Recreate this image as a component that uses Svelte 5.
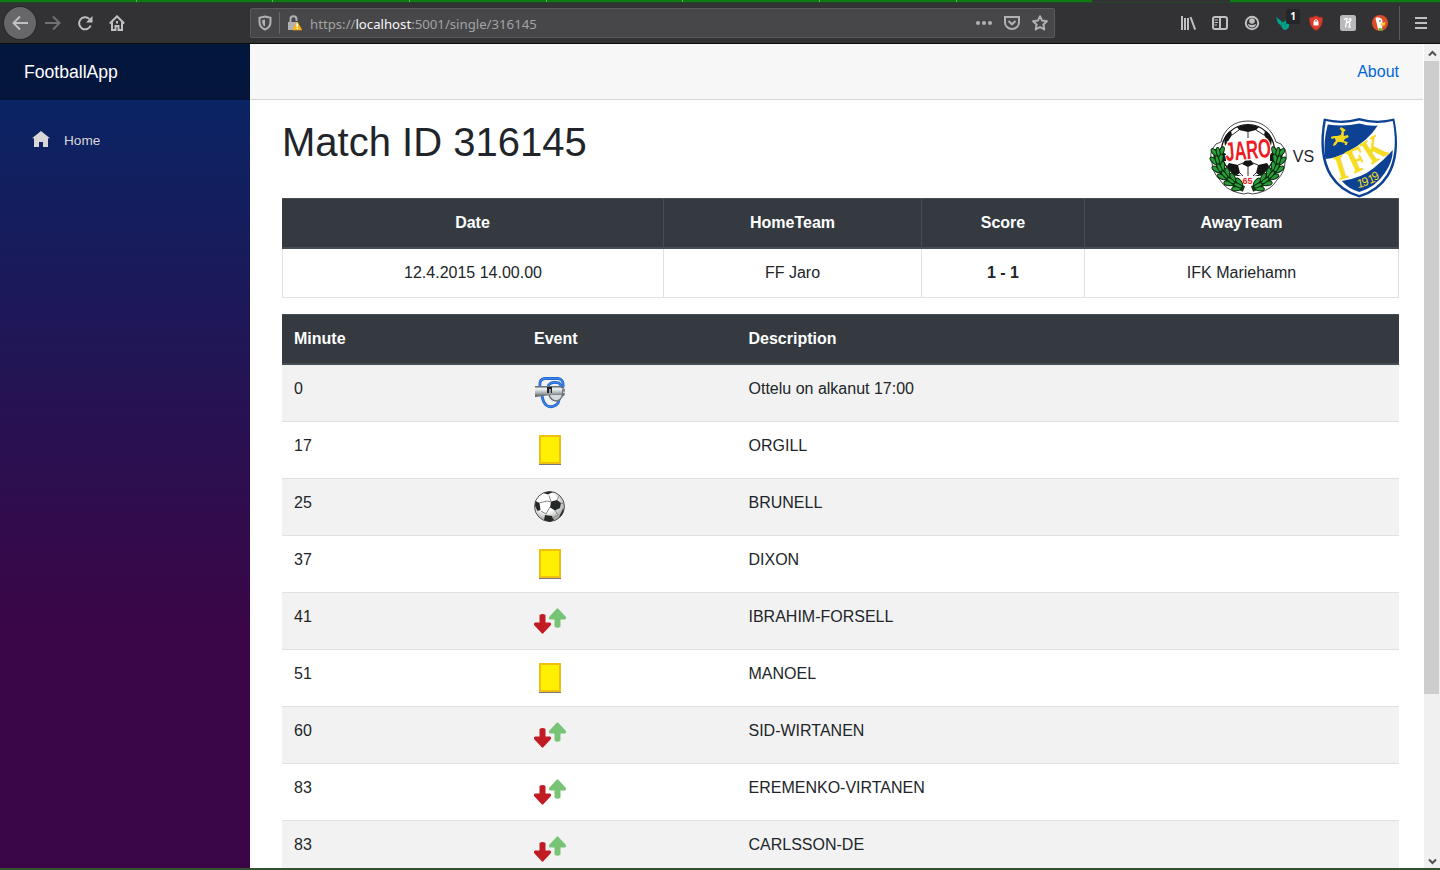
<script>
  const rows = [
    ['0', 'whistle', 'Ottelu on alkanut 17:00'],
    ['17', 'card', 'ORGILL'],
    ['25', 'ball', 'BRUNELL'],
    ['37', 'card', 'DIXON'],
    ['41', 'swap', 'IBRAHIM-FORSELL'],
    ['51', 'card', 'MANOEL'],
    ['60', 'swap', 'SID-WIRTANEN'],
    ['83', 'swap', 'EREMENKO-VIRTANEN'],
    ['83', 'swap', 'CARLSSON-DE']
  ];
  const leaves = [
    [9, 33, 65], [8, 41, 60], [10, 49, 48], [15, 56, 36], [21, 62, 22], [28, 67, 8]
  ];
</script>

<div class="screen">
  <div class="tabs">
    {#each Array(8) as _}<i></i>{/each}
    <b></b><em></em>
  </div>
  <div class="chrome">
    <div class="nav">
      <span class="back"><svg width="16" height="16" viewBox="0 0 16 16"><path d="M16 8H1.500M8 1.500L1.500 8L8 14.500" /></svg></span>
      <svg class="dim" width="16" height="16" viewBox="0 0 16 16"><path d="M0 8h14.500M8 1.500L14.500 8L8 14.500" /></svg>
      <svg width="16" height="16" viewBox="0 0 16 16"><path d="M12.300 4A6 6 0 1 0 13.700 10.500" /><path d="M15.500 1v6.500H9z" fill="#c0c0c1" stroke="none" /></svg>
      <svg width="16" height="16" viewBox="0 0 16 16"><path d="M.8 8.500L8 1.300l7.200 7.200M3 7v8h3.500v-4h3v4H13V7" /><path d="M8 6v2.500" /></svg>
    </div>
    <div class="url">
      <svg class="shield" width="14" height="16" viewBox="0 0 14 16"><path d="M7 1.500l5.500 1.300V7c0 4-2 6.200-5.500 7.500C3.500 13.200 1.500 11 1.500 7V2.800z" /><path d="M7 4.500v7C5 10.500 4.200 9 4.200 7V5z" fill="#b1b1b3" stroke="none" /></svg>
      <span class="sep"></span>
      <svg class="lock" width="16" height="16" viewBox="0 0 16 16"><path d="M3.500 7V4.500a3 3 0 0 1 6-.5v2" /><path d="M1 7h9l2 8H1z" fill="#b1b1b3" stroke="none" /><path d="M10.200 7L14.500 14.800H6z" fill="#ffb414" stroke="#ffb414" stroke-width="1" stroke-linejoin="round" /><path d="M10.200 8.500v3.300M10.200 12.800v1.300" stroke="#fff" stroke-width="1.500" /></svg>
      <span class="address">https://<strong>localhost</strong>:5001/single/316145</span>
      <svg width="16" height="16" viewBox="0 0 16 16"><g fill="#b1b1b3" stroke="none"><circle cx="2" cy="8" r="2" /><circle cx="8" cy="8" r="2" /><circle cx="14" cy="8" r="2" /></g></svg>
      <svg width="16" height="16" viewBox="0 0 16 16"><path d="M1 2h14v5.500a7 6.500 0 0 1-14 0zM4.500 6L8 9.300L11.500 6" /></svg>
      <svg width="16" height="16" viewBox="0 0 16 16"><path d="M8 1.200l2.100 4.400 4.800.6-3.500 3.300.9 4.900L8 12l-4.300 2.400.9-4.900L1.100 6.200l4.800-.6z" stroke-linejoin="round" /></svg>
    </div>
    <div class="tools">
      <svg width="16" height="16" viewBox="0 0 16 16"><path d="M2 1v14M5 3v12M8 3v12M10.500 2l4.700 12.600" /></svg>
      <svg width="16" height="16" viewBox="0 0 16 16"><rect x="1" y="2" width="14" height="12" rx="2" /><path d="M8 2v12" /><path d="M2.500 5h3.500M2.500 7.500h3.500M2.500 10h2.500" stroke-width="1.200" /></svg>
      <svg width="16" height="16" viewBox="0 0 16 16"><circle cx="8" cy="8" r="6.200" /><circle cx="8" cy="6" r="2.800" fill="#c0c0c1" stroke="none" /><path d="M3.800 8.800q4.200 2.500 8.400 0q-.7 3.700-4.200 3.700T3.800 8.800" fill="#c0c0c1" stroke="none" /></svg>
      <span class="ext"><svg width="16" height="16" viewBox="0 0 16 16"><g fill="#00a58c" stroke="none"><path d="M0 2l6 4.500v5L2 8zM5 7h8v5q-3 4.500-6 2L5 11z" /><path d="M8 7l4-4v6" /></g><path d="M5.500 6v6M9 8v5" stroke="#087568" stroke-width=".8" /></svg><span class="badge">1</span></span>
      <svg width="16" height="16" viewBox="0 0 16 16"><path d="M8 .8q3 2 6.500 1.800C14.500 9 13 13 8 15.500C3 13 1.500 9 1.500 2.600Q5 2.800 8 .8" fill="#dc3c2e" stroke="#a72c25" stroke-width=".8" /><path d="M5.500 6.500h5v4h-5z" fill="#fff" stroke="none" /><path d="M6.600 7V5.300q1.400-1.500 2.800 0V7" stroke="#fff" stroke-width="1" /></svg>
      <svg width="16" height="16" viewBox="0 0 16 16"><rect width="16" height="16" rx="2.500" fill="#b9b9bb" stroke="none" /><path d="M4 5q1.200-1.800 3-1.500L5.500 12.300M6 8.200q2.300-1.500 3.800 0L9 12h1.800M7 7.200q4-.5 3.800-3q-1-1.200-2 .8" stroke="#fff" stroke-width="1.300" /></svg>
      <svg width="16" height="16" viewBox="0 0 16 16"><circle cx="8" cy="8" r="8" fill="#df4c2a" stroke="none" /><path d="M3.500 3.500Q5 1.500 8 3q3 1 2.500 5L10 14.500q-2.500 1-3.800 0z" fill="#fff" stroke="none" /><path d="M8.500 8.200l5.500-1-1.500 2 1 1-4.500.5z" fill="#fc3" stroke="none" /><path d="M6.500 13l4 .5.500 2-4 .3z" fill="#5b3" stroke="none" /><circle cx="8" cy="6" r=".8" fill="#234" stroke="none" /></svg>
    </div>
    <span class="rule"></span>
    <svg class="burger" width="14" height="14" viewBox="0 0 14 14"><path d="M1 2h12M1 7h12M1 12h12" /></svg>
  </div>

  <div class="page">
    <aside>
      <div class="brand">FootballApp</div>
      <div class="home"><svg width="18" height="16" viewBox="0 0 18 16"><path d="M9 0l9 7.200h-2V16h-5v-5H7v5H2V7.200H0z" fill="#d7d7d7" stroke="none" /></svg><span>Home</span></div>
    </aside>
    <main>
      <header><a href="#about">About</a></header>
      <article>
        <div class="title">
          <h1>Match ID 316145</h1>
          <div class="versus">
            <svg width="80" height="80" viewBox="0 0 80 80">
              <path d="M39 3C25 3 15 11 12 24Q6 25 4 30Q0 36 3 44Q3 54 11 62Q17 72 30 75Q35 77 39 75Q43 77 49 75Q62 72 68 62Q76 54 76 44Q79 36 75 30Q73 25 67 24C63 11 53 3 39 3z" fill="#fff" stroke="#333" stroke-width=".9" />
              <circle cx="39" cy="33" r="26.500" fill="#fff" stroke="#111" stroke-width="1.200" />
              <g fill="#151515"><path d="M28 9Q39 4 50 9L47 12L39 14L30 12zM15 21Q17 15 22 13L23 17L16 28zM63 21Q61 15 56 13L55 17L62 28zM33 46L39 39L45 46L39 49zM12 33L17 36L17 43L14 43zM66 33L61 36L61 43L64 43zM20 45L29 47L31 55L26 58Q21 54 18 48zM58 45L49 47L47 55L52 58Q57 54 60 48z" /></g>
              <path d="M30 12L23 17M47 12L55 17M39 14V20M29 47L34 45M49 47L44 45M39 49V59M31 55L35 59M47 55L43 59" stroke="#333" fill="none" />
              <path d="M28 58H50L45 68L39 72L33 68z" fill="#fff" />
              {#each [1, -1] as side}
                <g transform={side < 0 ? 'translate(78 0) scale(-1 1)' : ''}>
                  <path d="M7 31Q7 60 35 71" stroke="#123a16" stroke-width="6" fill="none" />
                  {#each leaves as [x, y, r]}
                    <g transform="translate({x} {y}) rotate({r - 75})" fill="#2a9c3a" stroke="#0a2b0e" stroke-width="1"><ellipse cx="-3.500" cy="-1" rx="2.200" ry="4.800" transform="rotate(-30)" /><ellipse cx="3.500" cy="-1" rx="2.200" ry="4.800" transform="rotate(30)" /><ellipse cx="0" cy="1" rx="1.800" ry="4.500" /></g>
                  {/each}
                </g>
              {/each}
              <g transform="translate(17 43) rotate(-5) scale(1 1.600)"><text x="0" y="0" class="jaro">JARO</text></g>
              <text x="38.500" y="66" class="year65">65</text>
            </svg>
            <span>VS</span>
            <svg class="ifk" width="80" height="80" viewBox="0 0 80 80">
              <path d="M3 .5Q21 5 38.500 0Q56 5 73.500 .5Q81 37 68 58Q58 74 38.500 79.500Q19 74 9 58Q-4 37 3 .5" transform="translate(.8 0)" fill="#0c4194" />
              <g transform="translate(.8 0)">
                <path d="M5 3Q22 7 38.500 2.500Q55 7 72 3Q78 36 66 56.500Q56 72 38.500 77Q21 72 11 56.500Q-1 36 5 3" fill="#fff" />
                <path d="M7 6.500Q23 9 38.500 5.500Q49 8.500 57 7.500Q47 23 28 33Q16 40 4.500 41Q2 24 7 6.500M72 32Q72 44 64 55Q55 69 38.500 74Q28 71 21 63Q41 60 53 50Q63 42 72 32" fill="#0c4194" />
                <path d="M12 28l1-3 2-2-1-3-3 1-1-2 3-1 3 0 4-1 1-4-2-2 1-2 2 1 3 2-2 2 0 4 4-1 1 2-4 2-1 2 4 1-1 3-2 0 0-2-4-1-3 0-2 3z" fill="#f3d71c" />
                <g class="ifk-letters">
                  <g transform="translate(18.500 62) rotate(-17) scale(.95 1.200)"><text>I</text></g>
                  <g transform="translate(33.500 55.500) rotate(-25) scale(.95 1.200)"><text>F</text></g>
                  <g transform="translate(51 46.500) rotate(-33) scale(.92 1.200)"><text>K</text></g>
                </g>
                <g class="digits"><text x="37" y="70" transform="rotate(-10 37 70)">1</text><text x="42.500" y="68.500" transform="rotate(-18 42.500 68.500)">9</text><text x="49" y="66" transform="rotate(-22 49 66)">1</text><text x="53.500" y="63" transform="rotate(-27 53.500 63)">9</text></g>
              </g>
            </svg>
          </div>
        </div>
        <table class="match">
          <colgroup><col style="width:382px" /><col style="width:258px" /><col style="width:163px" /><col style="width:314px" /></colgroup>
          <thead><tr><th>Date</th><th>HomeTeam</th><th>Score</th><th>AwayTeam</th></tr></thead>
          <tbody><tr><td>12.4.2015 14.00.00</td><td>FF Jaro</td><td><b>1 - 1</b></td><td>IFK Mariehamn</td></tr></tbody>
        </table>
        <table class="events">
          <colgroup><col style="width:240px" /><col style="width:214.500px" /><col /></colgroup>
          <thead><tr><th>Minute</th><th>Event</th><th>Description</th></tr></thead>
          <tbody>
            {#each rows as [minute, kind, text]}
              <tr>
                <td>{minute}</td>
                <td>
                  <svg width="32" height="32" viewBox="0 0 32 32">
                    {#if kind === 'card'}
                      <path d="M5 30.500h22" stroke="#777" stroke-width="1" />
                      <rect x="6" y="2" width="20" height="27" fill="#ffef00" stroke="#f0bf10" stroke-width="2" />
                    {:else if kind === 'swap'}
                      <path d="M5.500 10Q8.500 8 11.500 10V17.500H16Q18 18.500 16.500 20.500L9.500 28Q8.500 29.500 7.500 28L.5 20.500Q-1 18.500 1 17.500H5.500z" fill="#c11b24" stroke="none" />
                      <path d="M20.500 21.500Q23.500 24 26.500 21.500V14.500H31Q33 13.500 31.500 11.500L24.500 4Q23.500 2.500 22.500 4L15.500 11.500Q14 13.500 16 14.500H20.500z" fill="#77c477" stroke="none" />
                    {:else if kind === 'ball'}
                      <defs><radialGradient id="shine" cx=".4" cy=".35" r=".65"><stop offset=".5" stop-color="#fff" /><stop offset="1" stop-color="#a0a29f" /></radialGradient></defs>
                      <circle cx="15.500" cy="15.500" r="15" fill="url(#shine)" stroke="#555" stroke-width="1" />
                      <g fill="#252a27"><path d="M17 10.500l6-1.500 4 3-1 5-5 2.500-5-3zM1.500 10l4 2 1 7-3 1-2.500-5zM9 2q6-2.500 10-1l-5 2.500zM11 24l7 1 2 4-4 2-6-2zM29 18l1 0-2 6-3 2z" /></g>
                      <path d="M17 10.500l-2-6M5 12l8-2 4 1M16 16l-4 7M7 20l5 3M21 19l3 5-6 3M23 9l2-4M27 12l3 1" stroke="#888" fill="none" stroke-width="1" />
                    {:else}
                      <defs><linearGradient id="steel" x2="0" y2="1"><stop stop-color="#4c555a" /><stop offset=".25" stop-color="#f4f7f8" /><stop offset=".65" stop-color="#a4acb1" /><stop offset="1" stop-color="#464d52" /></linearGradient></defs>
                      <path d="M6 9Q5 2 11 1.500H24Q30 2 29 10M8 19Q9 25 12 28Q16 31.500 22 28Q25 26 25 22M14 9Q17 4 25 6L28 10" fill="none" stroke="#1c60c8" stroke-width="2.800" />
                      <path d="M6 9Q5 2 11 1.500H24Q30 2 29 10M8 19Q9 25 12 28Q16 31.500 22 28Q25 26 25 22M14 9Q17 4 25 6L28 10" fill="none" stroke="#3f86ea" stroke-width="1.300" />
                      <path d="M15 18Q17 24 23 24Q30 22 28 12" fill="#d5dade" stroke="#697176" stroke-width="1.500" />
                      <path d="M1 9H26L28 11V18H17L1 20z" fill="url(#steel)" />
                      <path d="M13 10h5v6h-5z" fill="#202325" /><path d="M15 12h2v4h-2z" fill="#99a" />
                      <path d="M27 10l3 1v6l-1 3" fill="none" stroke="#5d666b" stroke-width="1.500" stroke-dasharray="3 1" />
                    {/if}
                  </svg>
                </td>
                <td>{text}</td>
              </tr>
            {/each}
          </tbody>
        </table>
      </article>
    </main>
    <div class="scroll">
      <svg width="9" height="7" viewBox="0 0 9 7"><path d="M1 5.500L4.500 2L8 5.500" /></svg>
      <div class="track"><div class="thumb"></div></div>
      <svg width="9" height="7" viewBox="0 0 9 7"><path d="M1 1.500L4.500 5L8 1.500" /></svg>
    </div>
  </div>
  <div class="desk"></div>
</div>

<style>
  :global(body) { margin: 0; overflow: hidden; }
  * { box-sizing: border-box; }
  .screen { width: 1440px; height: 870px; display: flex; flex-direction: column; overflow: hidden; font: 16px/24px "Liberation Sans", Arial, sans-serif; color: #212529; background: #323234; }
  .tabs { height: 3px; display: flex; flex: none; border-bottom: 1px solid #24442a; }
  .tabs i { width: 136.700px; background: #107c10; border-right: 1px solid #6aa96a; }
  .tabs i:nth-child(8) { border: 0; width: 135px; }
  .tabs b { width: 138px; background: #323234; }
  .tabs em { flex: 1; background: #107c10; }
  .chrome { height: 41px; flex: none; display: flex; align-items: center; border-bottom: 1px solid #0c0c0d; background: #323234; }
  .chrome svg { flex: none; display: block; fill: none; stroke: #c0c0c1; stroke-width: 2; }
  .nav { width: 250px; display: flex; align-items: center; gap: 16px; padding-left: 4px; }
  .back { width: 32px; height: 32px; border-radius: 50%; background: #67676a; display: grid; place-items: center; box-shadow: 0 0 0 1px #29292a; margin-right: -7px; }
  .chrome .dim { stroke: #717173; }
  .url { width: 805px; height: 30px; border: 1px solid #5a5a5d; border-radius: 2px; background: #474749; display: flex; align-items: center; padding: 0 6px 0 7px; }
  .url > svg { stroke: #b1b1b3; margin-left: 12px; }
  .url > .shield { margin-left: 0; }
  .url > .lock { margin-left: 7px; }
  .sep { width: 1px; height: 22px; background: #68686b; margin-left: 7px; }
  .address { flex: 1; padding: 2px 0 0 7px; font: 13.200px/20px "Noto Sans", sans-serif; color: #a3a3a5; }
  .address strong { font-weight: 400; color: #f9f9fa; }
  .tools { display: flex; gap: 16px; margin-left: 125px; }
  .ext { position: relative; width: 16px; height: 16px; }
  .badge { position: absolute; left: 10px; top: -6px; width: 14px; height: 15px; border-radius: 2px; background: #242628; color: #fff; font: bold 10px/15px "Noto Sans", sans-serif; text-align: center; }
  .rule { width: 1px; height: 34px; background: #5b5b5d; margin-left: 11px; }
  .chrome .burger { margin-left: 14px; }
  .page { height: 824px; flex: none; display: flex; background: #fff; overflow: hidden; }
  aside { width: 250px; background: linear-gradient(180deg, #052767 0%, #3a0647 70%); }
  .brand { height: 56px; padding: 16px 24px; background: rgba(0, 0, 0, .4); color: #fff; font-size: 17.600px; }
  .home { display: flex; align-items: center; gap: 14px; padding: 0 0 0 32px; height: 80px; font-size: 13.600px; color: #d7d7d7; line-height: 32px; }
  .home svg { margin-top: -2px; }
  .home span { padding-top: 2px; }
  main { width: 1173px; }
  header { height: 56px; background: #f7f7f7; border-bottom: 1px solid #d6d5d5; padding: 16px 24px; text-align: right; }
  a { color: #0366d6; text-decoration: none; }
  article { padding: 18px 24px 0 32px; }
  .title { height: 80px; display: flex; justify-content: space-between; align-items: flex-start; }
  h1 { margin: 0; font: 400 40px/48px "Liberation Sans", Arial, sans-serif; }
  .versus { display: flex; align-items: center; gap: 4px; height: 80px; margin-right: -1px; }
  .versus svg { overflow: visible; }
  .versus span { width: 23px; margin: -2px 1px 0 -1px; text-align: center; }
  .jaro { font: bold 16.500px "Liberation Sans", Arial, sans-serif; fill: #ed1c24; stroke: #fff; stroke-width: 1.500; paint-order: stroke; }
  .year65 { font: bold 9px "Liberation Sans", Arial, sans-serif; fill: #e51c23; text-anchor: middle; }
  .ifk-letters { font: bold 29px "Liberation Serif", serif; fill: #f5dc20; stroke: #f5dc20; stroke-width: .5; }
  .digits { font: 12px "Liberation Sans", Arial, sans-serif; fill: #f5dc20; }
  table { border-collapse: separate; border-spacing: 0; table-layout: fixed; width: 1117px; margin: 0; }
  th { background: #343a40; color: #fff; border-top: 1px solid #454d55; border-bottom: 2px solid #454d55; }
  td, th { padding: 12px; vertical-align: top; text-align: left; }
  .match { height: 100px; margin-bottom: 16px; }
  .match th { height: 51px; text-align: center; border-right: 1px solid #454d55; }
  .match td { height: 49px; text-align: center; border-right: 1px solid #dee2e6; border-bottom: 1px solid #dee2e6; }
  .match td:first-child { border-left: 1px solid #dee2e6; }
  .events th { height: 51px; }
  .events td { height: 57px; border-bottom: 1px solid #dee2e6; padding-bottom: 0; }
  .events td svg { display: block; }
  .events tbody tr:nth-child(odd) { background: #f2f2f2; }
  .scroll { width: 17px; background: #f0f0f0; border-left: 1px solid #fff; display: flex; flex-direction: column; align-items: center; padding: 6px 0 3px; }
  .scroll svg { flex: none; fill: none; stroke: #505050; stroke-width: 2; }
  .track { flex: 1; width: 100%; padding-top: 4px; }
  .thumb { height: 633px; width: 15px; background: #cdcdcd; }
  .desk { height: 2px; background: #35502f; }
</style>
